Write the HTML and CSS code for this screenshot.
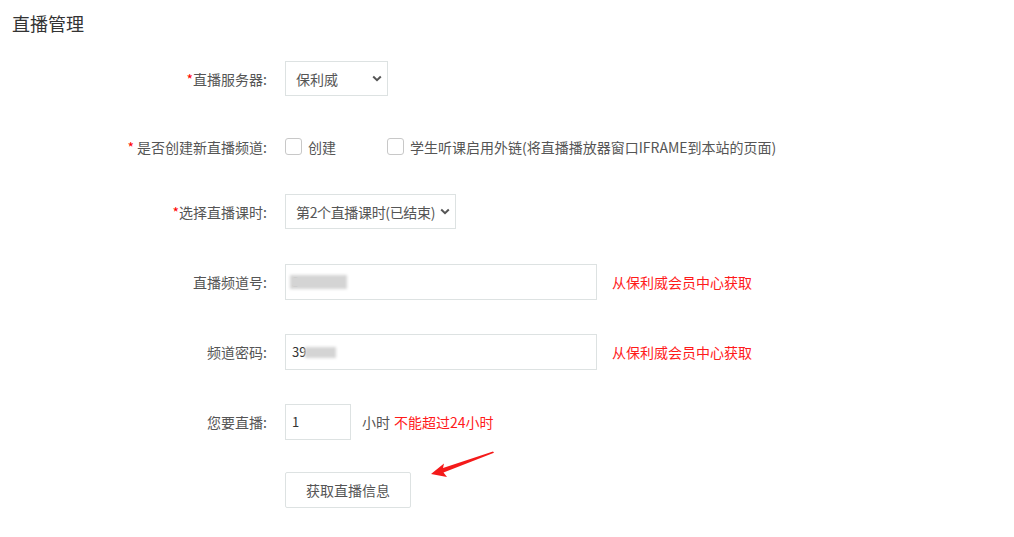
FILE: index.html
```html
<!DOCTYPE html>
<html lang="zh">
<head>
<meta charset="utf-8">
<title>直播管理</title>
<link rel="stylesheet" href="styles.css">
</head>
<body>
<div class="page">
  <h1 class="title">直播管理</h1>
  <div class="form">
    <div class="row row-1">
      <label class="label"><span class="req">*</span>直播服务器:</label>
      <div class="select select-server">保利威<span class="chev"><svg width="10" height="7" viewBox="0 0 10 7"><path d="M1.2 1.5 L5 5.2 L8.8 1.5" fill="none" stroke="#555" stroke-width="2"/></svg></span></div>
    </div>
    <div class="row row-2">
      <label class="label"><span class="req">*</span> 是否创建新直播频道:</label>
      <span class="check"><span class="box"></span>创建</span>
      <span class="check check-2"><span class="box"></span>学生听课启用外链(将直播播放器窗口IFRAME到本站的页面)</span>
    </div>
    <div class="row">
      <label class="label"><span class="req">*</span>选择直播课时:</label>
      <div class="select select-lesson"><span class="tight">第2个直播课时(已结束)</span><span class="chev"><svg width="10" height="7" viewBox="0 0 10 7"><path d="M1.2 1.5 L5 5.2 L8.8 1.5" fill="none" stroke="#555" stroke-width="2"/></svg></span></div>
    </div>
    <div class="row">
      <label class="label">直播频道号:</label>
      <div class="input input-wide"><span class="val">3</span><span class="blur blur-a"></span></div>
      <span class="hint">从保利威会员中心获取</span>
    </div>
    <div class="row">
      <label class="label">频道密码:</label>
      <div class="input input-wide"><span class="val">39</span><span class="blur blur-b"></span></div>
      <span class="hint">从保利威会员中心获取</span>
    </div>
    <div class="row row-6">
      <label class="label">您要直播:</label>
      <div class="input input-small"><span class="val">1</span></div>
      <span class="unit">小时</span><span class="hint hint-inline">不能超过24小时</span>
    </div>
    <div class="row row-btn">
      <span class="label"></span>
      <button class="btn">获取直播信息</button>
      <svg class="arrow" width="70" height="30" viewBox="0 0 70 30"><path d="M63 0.5 L13 17 L14 12.5 L1 23 L17 26 L13.5 21.5 L64 1.8 Z" fill="#f41a1a"/></svg>
    </div>
  </div>
</div>
</body>
</html>
```
FILE: styles.css
```css
html, body {
  margin: 0;
  padding: 0;
  background: #fff;
}
body {
  font-family: "Noto Sans CJK SC", "Noto Sans", "Liberation Sans", sans-serif;
  font-size: 14px;
  color: #555;
}
.page {
  width: 1014px;
}
.title {
  margin: 10px 0 0 12px;
  font-size: 18px;
  font-weight: normal;
  line-height: 26px;
  color: #333;
}
.form {
  margin-top: 25px;
}
.row {
  display: flex;
  align-items: center;
  height: 35px;
  margin-bottom: 35px;
}
.row-1 { margin-bottom: 33px; }
.row-2 { margin-bottom: 30px; }
.row-6 { margin-bottom: 33px; }
.label {
  width: 267px;
  flex: none;
  margin-right: 18px;
  text-align: right;
  line-height: 20px;
  color: #555;
}
.req {
  color: #f00;
}
.select {
  position: relative;
  box-sizing: border-box;
  height: 35px;
  border: 1px solid #dde2e2;
  display: flex;
  align-items: center;
  padding-left: 10px;
  color: #555;
}
.select-server { width: 103px; }
.select-lesson { width: 171px; }
.tight {
  letter-spacing: -0.35px;
}
.chev {
  position: absolute;
  right: 5px;
  top: 13px;
  line-height: 0;
}
.check {
  display: flex;
  align-items: center;
  color: #555;
}
.check-2 {
  margin-left: 51px;
}
.box {
  width: 15px;
  height: 15px;
  border: 1px solid #c8c8c8;
  border-radius: 3px;
  margin-right: 6px;
  background: #fff;
}
.input {
  position: relative;
  box-sizing: border-box;
  height: 36px;
  border: 1px solid #dde2e2;
  display: flex;
  align-items: center;
  padding-left: 6px;
  color: #333;
  font-size: 13px;
}
.input-wide { width: 312px; }
.input-small { width: 66px; }
.blur {
  position: absolute;
  background: #d4d4d4;
  filter: blur(1.5px);
}
.blur-a {
  left: 4px;
  top: 10px;
  width: 57px;
  height: 14px;
}
.blur-b {
  left: 19px;
  top: 12px;
  width: 31px;
  height: 11px;
}
.hint {
  color: #ff1a1a;
  margin-left: 15px;
}
.unit {
  margin-left: 11px;
  color: #555;
}
.hint-inline {
  margin-left: 4px;
}
.btn {
  box-sizing: border-box;
  width: 126px;
  height: 36px;
  border: 1px solid #dde2e2;
  border-radius: 2px;
  background: #fff;
  font-family: inherit;
  font-size: 14px;
  color: #555;
  padding: 0;
}
.row-btn {
  position: relative;
}
.arrow {
  position: absolute;
  left: 430px;
  top: -21px;
}
```
